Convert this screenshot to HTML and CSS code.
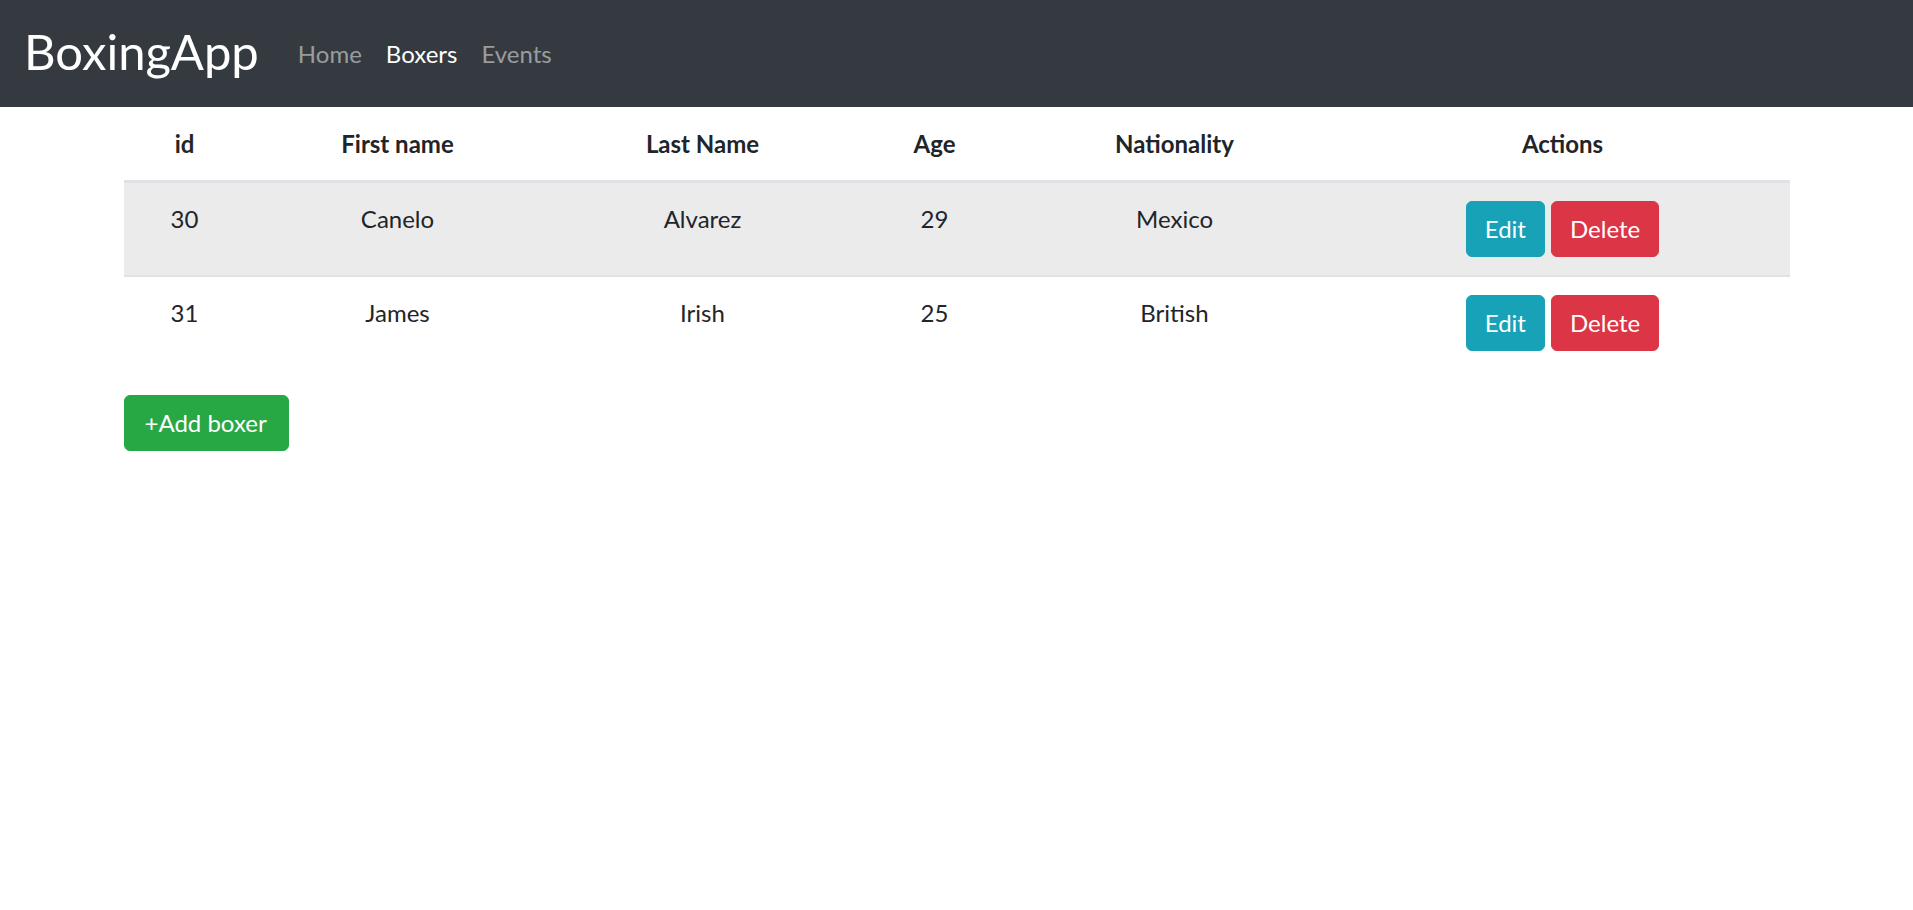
FILE: index.html
```html
<!DOCTYPE html>
<html lang="en">
<head>
<meta charset="utf-8">
<title>BoxingApp</title>
<link rel="stylesheet" href="styles.css">
</head>
<body>
<nav class="navbar">
  <a class="brand" href="#">BoxingApp</a>
  <ul class="nav">
    <li><a class="nav-link" href="#">Home</a></li>
    <li><a class="nav-link active" href="#">Boxers</a></li>
    <li><a class="nav-link" href="#">Events</a></li>
  </ul>
</nav>
<main class="container">
  <table class="table">
    <colgroup>
      <col class="c-id"><col class="c-first"><col class="c-last"><col class="c-age"><col class="c-nat"><col class="c-act">
    </colgroup>
    <thead>
      <tr><th>id</th><th>First name</th><th>Last Name</th><th>Age</th><th>Nationality</th><th>Actions</th></tr>
    </thead>
    <tbody>
      <tr class="shaded">
        <td>30</td><td>Canelo</td><td>Alvarez</td><td>29</td><td>Mexico</td>
        <td><div class="actions"><button class="btn btn-info">Edit</button><button class="btn btn-danger">Delete</button></div></td>
      </tr>
      <tr>
        <td>31</td><td>James</td><td>Irish</td><td>25</td><td>British</td>
        <td><div class="actions"><button class="btn btn-info">Edit</button><button class="btn btn-danger">Delete</button></div></td>
      </tr>
    </tbody>
  </table>
  <button class="btn btn-success btn-add">+Add boxer</button>
</main>
</body>
</html>
```
FILE: styles.css
```css
* { box-sizing: border-box; }
html, body { margin: 0; padding: 0; }
body {
  font-family: Lato, "Liberation Sans", sans-serif;
  font-size: 24px;
  line-height: 36px;
  color: #212529;
  background: #fff;
}
.navbar {
  display: flex;
  align-items: center;
  height: 107px;
  padding: 0 24px;
  background: #343a40;
}
.brand {
  font-size: 49px;
  line-height: 60px;
  color: #fff;
  text-decoration: none;
  margin-right: 27px;
  margin-top: -5px;
}
.nav {
  display: flex;
  list-style: none;
  margin: 0;
  padding: 0;
}
.nav-link {
  display: block;
  padding: 0 12px;
  color: rgba(255,255,255,.5);
  text-decoration: none;
}
.nav-link.active { color: #fff; }
.container {
  width: 1666px;
  margin: 0 auto;
}
.table {
  width: 100%;
  border-collapse: collapse;
  table-layout: fixed;
  margin-bottom: 26px;
}
.c-id { width: 122px; }
.c-first { width: 304px; }
.c-last { width: 306px; }
.c-age { width: 158px; }
.c-nat { width: 322px; }
.c-act { width: 454px; }
.table th, .table td {
  padding: 18px;
  text-align: center;
  vertical-align: top;
}
.table th {
  font-weight: 700;
  padding-top: 19px;
  border-bottom: 3px solid #dee2e6;
}
.table tbody tr + tr td { border-top: 2px solid #dee2e6; }
.table tbody tr.shaded { background: #ebebeb; }
.actions {
  display: flex;
  justify-content: center;
  gap: 6px;
}
.btn {
  font-family: inherit;
  font-size: 24px;
  line-height: 36px;
  padding: 9px 18px;
  border: 1.5px solid transparent;
  border-radius: 6px;
  color: #fff;
  cursor: pointer;
}
.btn-info { background: #17a2b8; border-color: #17a2b8; }
.btn-danger { background: #dc3545; border-color: #dc3545; }
.btn-success { background: #28a745; border-color: #28a745; }
.btn-add { padding-left: 20px; padding-right: 21px; }
```
